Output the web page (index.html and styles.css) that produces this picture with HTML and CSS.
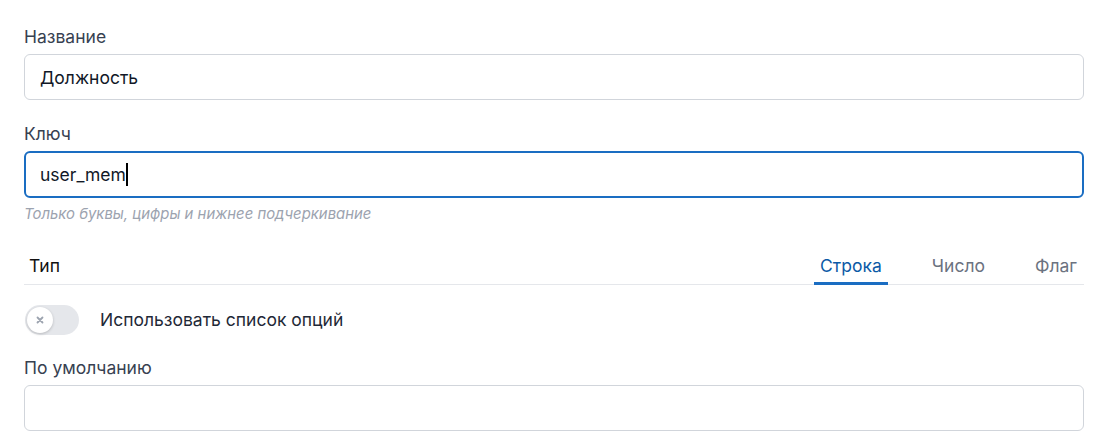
FILE: index.html
```html
<!DOCTYPE html>
<html>

<head>
  <meta charset="utf-8">
  <meta name="viewport" content="width=device-width, initial-scale=1.0">
  <link rel="stylesheet" href="styles.css">
</head>

<body>
  <form class="form">
    <div class="field">
      <label class="label">Название</label>
      <input class="input" type="text" value="Должность">
    </div>

    <div class="field">
      <label class="label">Ключ</label>
      <div class="input focused">user_mem<span class="caret"></span></div>
      <div class="hint">Только буквы, цифры и нижнее подчеркивание</div>
    </div>

    <div class="type-row">
      <div class="type-label">Тип</div>
      <div class="tabs">
        <div class="tab active">Строка</div>
        <div class="tab">Число</div>
        <div class="tab">Флаг</div>
      </div>
    </div>

    <div class="switch-row">
      <div class="switch">
        <span class="knob">
          <svg width="8" height="8" viewBox="0 0 8 8">
            <path d="M1.5 1.5l5 5M6.5 1.5l-5 5" stroke="#9ca3af" stroke-width="1.8" stroke-linecap="round" />
          </svg>
        </span>
      </div>
      <span class="switch-label">Использовать список опций</span>
    </div>

    <div class="field">
      <label class="label">По умолчанию</label>
      <input class="input" type="text" value="">
    </div>
  </form>
</body>

</html>
```

FILE: styles.css
```css
* {
  box-sizing: border-box;
  margin: 0;
  padding: 0;
}

body {
  font-family: Inter, "Noto Sans", sans-serif;
  background-color: #fff;
  color: #111827;
}

.form {
  padding: 25px 19px 0 24px;
}

.field {
  margin-bottom: 22px;
}

.label {
  display: block;
  font-size: 17.5px;
  line-height: 24px;
  color: #374151;
  margin-bottom: 5px;
}

.input {
  display: flex;
  align-items: center;
  width: 100%;
  height: 46px;
  padding: 0 15px;
  border: 1px solid #d1d5db;
  border-radius: 6px;
  font-family: inherit;
  font-size: 17.5px;
  color: #111827;
  background: #fff;
  outline: none;
}

.input.focused {
  height: 47px;
  padding: 0 14px;
  border: 2px solid #1a6dc2;
}

.caret {
  display: inline-block;
  width: 2px;
  height: 23px;
  background: #000;
}

.hint {
  margin-top: 6px;
  font-size: 14.9px;
  line-height: 20px;
  font-style: italic;
  color: #9ca3af;
}

.type-row {
  display: flex;
  justify-content: space-between;
  align-items: flex-end;
  margin-top: 30px;
  border-bottom: 1px solid #e5e7eb;
}

.type-label {
  font-size: 17.5px;
  line-height: 24px;
  color: #111;
  padding: 0 0 6px 5px;
}

.tabs {
  display: flex;
  gap: 38px;
}

.tab {
  font-size: 17.5px;
  line-height: 24px;
  color: #6b7280;
  padding: 0 6px 4px;
  border-bottom: 3px solid transparent;
  margin-bottom: -1px;
}

.tab:last-child {
  padding-right: 7px;
}

.tab.active {
  color: #0b5aa6;
  border-bottom-color: #1a6dc2;
}

.switch-row {
  display: flex;
  align-items: center;
  gap: 21px;
  margin: 20px 0 21px 1px;
}

.switch {
  width: 54px;
  height: 30px;
  border-radius: 15px;
  background: #e5e7eb;
  padding: 2px;
}

.knob {
  display: flex;
  align-items: center;
  justify-content: center;
  width: 26px;
  height: 26px;
  border-radius: 50%;
  background: #fff;
  box-shadow: 0 1px 3px rgba(0, 0, 0, 0.2);
}

.switch-label {
  font-size: 17.5px;
  line-height: 24px;
  color: #1f2937;
}
```
